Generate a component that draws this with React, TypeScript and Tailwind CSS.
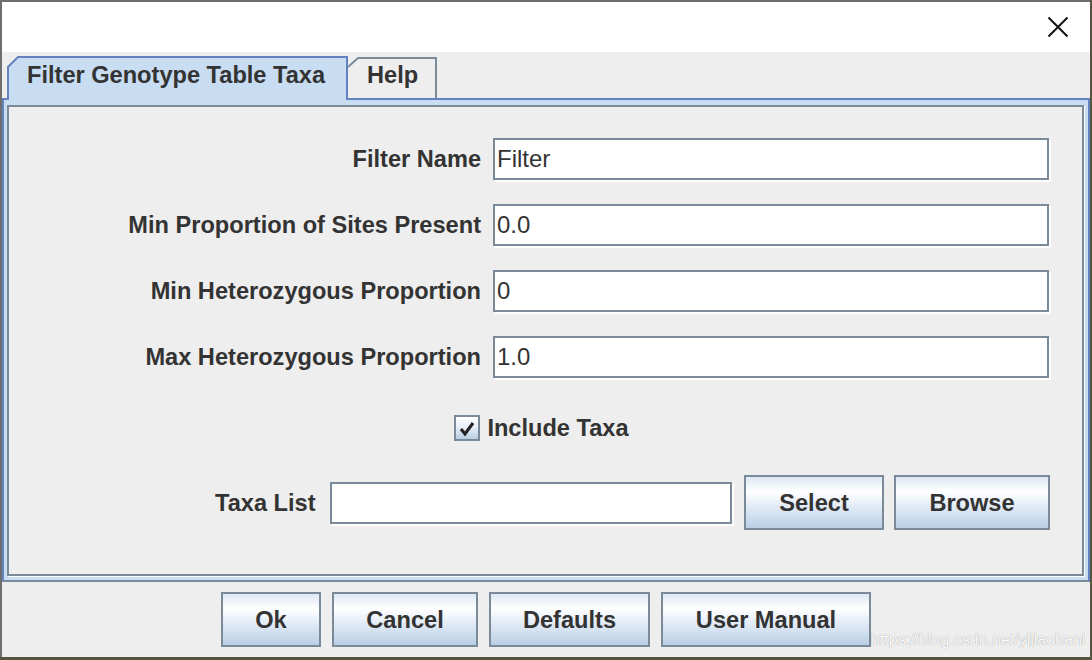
import React from "react";

const btn =
  "h-[55px] border-2 border-[#7a8a99] bg-[linear-gradient(to_bottom,#dde8f3_0%,#ffffff_28%,#e8eff8_52%,#b9cfe6_100%)] text-[23.6px] leading-[26px] font-bold text-[#333] flex items-center justify-center";

function Field({ value, w }: { value: string; w: string }) {
  return (
    <div
      className={`${w} h-[42px] bg-white border-2 border-[#7a8a99] shadow-[2px_2px_0_#fff] flex items-center pl-[2px] text-[24px] leading-[26px] text-[#333]`}
    >
      {value}
    </div>
  );
}

function Row({ label, value }: { label: string; value: string }) {
  return (
    <div className="flex items-center">
      <div className="w-[472px] text-right text-[23.6px] leading-[26px] font-bold text-[#333] whitespace-nowrap">{label}</div>
      <div className="ml-[12px]">
        <Field value={value} w="w-[556px]" />
      </div>
    </div>
  );
}

export default function App() {
  return (
    <div className="w-[1092px] h-[660px] bg-[#55553f] overflow-hidden font-['Liberation_Sans',Arial,sans-serif] relative">
      <div className="w-[1090px] h-[657px] border-l-2 border-t-2 border-[#6e6e6e] bg-[#eeeeee] flex flex-col">
        {/* title bar */}
        <div className="h-[50px] bg-white flex items-center justify-end pr-[21px]">
          <svg width="22" height="22" viewBox="0 0 22 22">
            <path d="M1.5 1.5 L20.5 20.5 M20.5 1.5 L1.5 20.5" stroke="#111" strokeWidth="2" />
          </svg>
        </div>
        {/* tabs */}
        <div className="h-[46px] flex items-end pl-[5px] relative z-10">
          <div className="relative w-[341px] h-[44px] -mb-[2px]">
            <svg className="absolute inset-0" width="341" height="44" viewBox="0 0 341 44">
              <path d="M1 44 V11 L11 1 H340 V44 Z" fill="#c8ddf2" />
              <path d="M1 44 V11 L11 1 H340 V44" fill="none" stroke="#6382bf" strokeWidth="2" />
            </svg>
            <div className="relative pl-[20px] pt-[6px] text-[23.6px] leading-[26px] font-bold text-[#333] whitespace-nowrap">
              Filter Genotype Table Taxa
            </div>
          </div>
          <div className="relative w-[90px] h-[41px]">
            <svg className="absolute inset-0" width="90" height="41" viewBox="0 0 90 41">
              <path d="M0 41 V10 L10 1 H88 V41 Z" fill="#eeeeee" />
              <path d="M0 10 L10 1 H88 V41" fill="none" stroke="#7a8a99" strokeWidth="2" />
            </svg>
            <div className="relative pl-[19px] pt-[5px] text-[23.6px] leading-[26px] font-bold text-[#333]">Help</div>
          </div>
        </div>
        {/* content panel */}
        <div className="h-[484px] border-t-2 border-l-2 border-r-2 border-b-2 border-[#6382bf] border-b-[#7a8a99] bg-[#c8ddf2] pt-[5px] pl-[3px] pr-[4px] pb-[4px]">
          <div className="h-full border-2 border-[#7a8a99] shadow-[1px_1px_0_#fff] bg-[#eeeeee] flex flex-col pt-[31px]">
            <div className="flex flex-col gap-[24px]">
              <Row label="Filter Name" value="Filter" />
              <Row label="Min Proportion of Sites Present" value="0.0" />
              <Row label="Min Heterozygous Proportion" value="0" />
              <Row label="Max Heterozygous Proportion" value="1.0" />
            </div>
            <div className="mt-[37px] flex justify-center items-center pr-[8px]">
              <div className="w-[26px] h-[26px] border-2 border-[#7a8a99] bg-[linear-gradient(to_bottom,#ffffff_0%,#e8eff8_45%,#b9cfe6_100%)] flex items-center justify-center">
                <svg width="18" height="18" viewBox="0 0 18 18">
                  <path d="M3 10 L7 15 L15 4" fill="none" stroke="#222" strokeWidth="3" strokeLinejoin="miter" />
                </svg>
              </div>
              <div className="ml-[7px] text-[23.6px] leading-[26px] font-bold text-[#333]">Include Taxa</div>
            </div>
            <div className="mt-[34px] flex items-center pl-[206px]">
              <div className="text-[23.6px] leading-[26px] font-bold text-[#333] w-[102px] whitespace-nowrap">Taxa List</div>
              <div className="ml-[13px]">
                <Field value="" w="w-[402px]" />
              </div>
              <div className={`${btn} w-[140px] ml-[12px]`}>Select</div>
              <div className={`${btn} w-[156px] ml-[10px]`}>Browse</div>
            </div>
          </div>
        </div>
        {/* bottom buttons */}
        <div className="flex-1 flex justify-center gap-[11px] pt-[10px]">
          <div className={`${btn} w-[100px]`}>Ok</div>
          <div className={`${btn} w-[146px]`}>Cancel</div>
          <div className={`${btn} w-[161px]`}>Defaults</div>
          <div className={`${btn} w-[210px]`}>User Manual</div>
        </div>
      </div>
      <div className="absolute left-[871px] top-[630px] text-[16px] leading-[20px] text-[#fbfbfb] [text-shadow:0_0_1px_#888] whitespace-nowrap">
        https://blog.csdn.net/yijiaobani
      </div>
    </div>
  );
}
